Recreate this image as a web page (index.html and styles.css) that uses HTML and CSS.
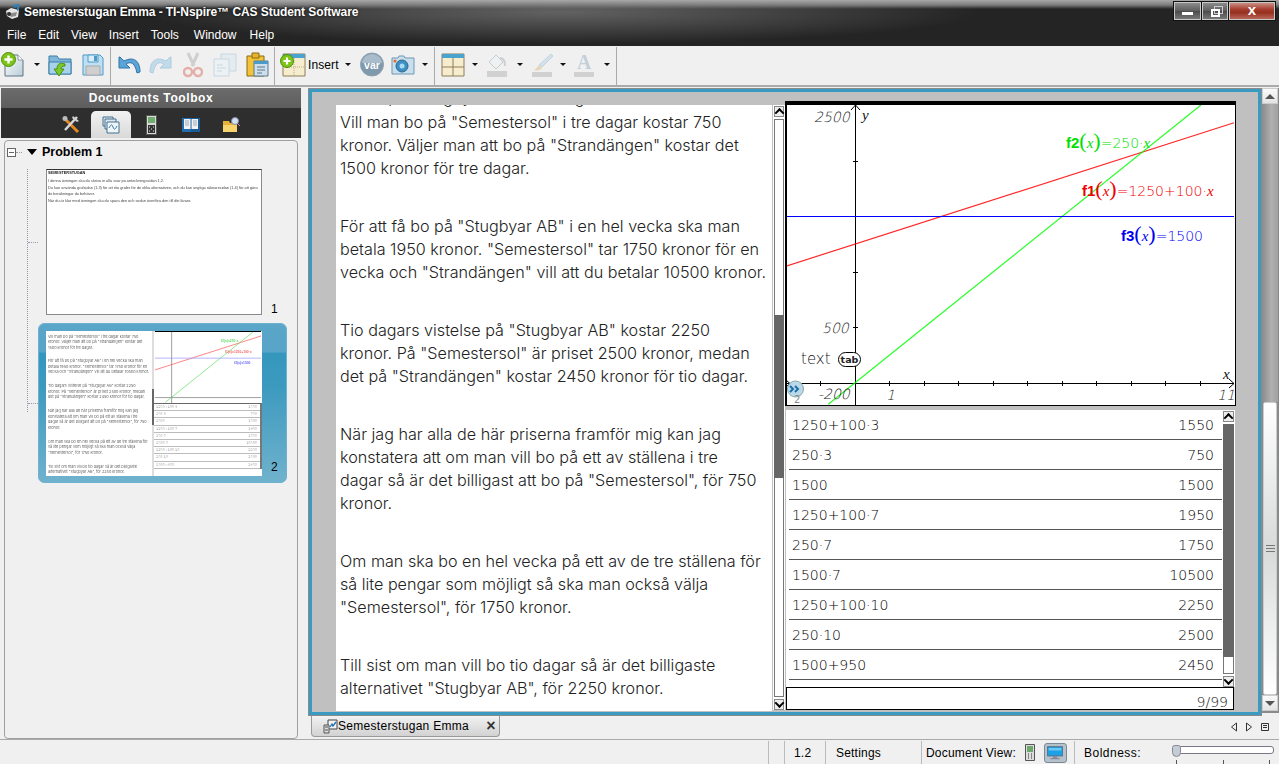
FILE: index.html
```html
<!DOCTYPE html>
<html lang="sv">
<head>
<meta charset="utf-8">
<title>Semesterstugan Emma - TI-Nspire™ CAS Student Software</title>
<link rel="stylesheet" href="styles.css">
</head>
<body>
<div class="app">
  <header class="chrome">
    <div class="titlebar">
      <svg class="appicon" width="18" height="16" viewBox="0 0 18 16"><path d="M2 7l5-3 8 2-1 7-6 2-5-3z" fill="#e6e6e6"/><path d="M3 8l5 1 5-1-1 4-5 1z" fill="#8a8a8a"/><path d="M9 1l6-1v6l-2 1V3l-3 1z" fill="#2f7fb5"/><circle cx="5" cy="10" r="2" fill="#333"/></svg>
      <span class="title">Semesterstugan Emma - TI-Nspire™ CAS Student Software</span>
      <div class="winbtns">
        <span class="winbtn wmin"><i class="minbar"></i></span>
        <span class="winbtn wmax"><i class="maxback"></i><i class="maxfront"></i></span>
        <span class="winbtn wclose">x</span>
      </div>
    </div>
    <nav class="menubar"><span>File</span><span>Edit</span><span>View</span><span>Insert</span><span>Tools</span><span>Window</span><span>Help</span></nav>
  </header>

  <div class="toolbar">
    <svg class="tool" width="24" height="26" viewBox="0 0 24 26"><defs><linearGradient id="pg" x1="0" y1="0" x2="1" y2="1"><stop offset="0" stop-color="#fff"/><stop offset="1" stop-color="#b9cdd8"/></linearGradient></defs><path d="M4 3h13l5 5v16H4z" fill="url(#pg)" stroke="#5f7483"/><path d="M17 3v5h5" fill="#fff" stroke="#8a9aa5"/><circle cx="7.500" cy="7.500" r="7" fill="#7cc417" stroke="#4f8f10"/><path d="M7.500 3.500v8M3.500 7.500h8" stroke="#fff" stroke-width="2.400"/></svg>
    <i class="drop d1"></i>
    <svg class="tool m8" width="24" height="24" viewBox="0 0 24 24"><path d="M1 3h8l2 3h12v15H1z" fill="#7fb6d9" stroke="#3b7fa8"/><path d="M1 9h22v12H1z" fill="#a9d2ea" stroke="#3b7fa8"/><path d="M17 11c-5-2-8 0-8 5H6l5 7 5-7h-3c0-2 1-3 4-3z" fill="#7cc92b" stroke="#4a9016"/></svg>
    <svg class="tool m10" width="22" height="24" viewBox="0 0 22 24"><path d="M1 2h17l3 3v17H1z" fill="#bfe0f2" stroke="#4d9ac8"/><path d="M6 2h10v7H6z" fill="#d8eef9" stroke="#4d9ac8"/><path d="M12 3h3v5h-3z" fill="#4d9ac8"/><path d="M4 13h14v9H4z" fill="#cfcfcf" stroke="#aaa"/></svg>
    <i class="sep s1"></i>
    <svg class="tool m6" width="24" height="22" viewBox="0 0 24 22"><path d="M2 3v11h11l-4-4c5-3 9-1 11 9l3-1c0-11-6-16-16-11L3 3z" fill="#5da4d6" stroke="#2c76ab"/></svg>
    <svg class="tool m8 faded" width="24" height="22" viewBox="0 0 24 22"><path d="M22 3v11H11l4-4c-5-3-9-1-11 9l-3-1C1 7 7 2 17 7l4-4z" fill="#9ccbe6" stroke="#77aecf"/></svg>
    <svg class="tool m10 faded" width="20" height="26" viewBox="0 0 20 26"><path d="M5 1l6 13M15 1L9 14" stroke="#b5b5b5" stroke-width="3"/><circle cx="5" cy="20" r="4" fill="none" stroke="#d97a6c" stroke-width="2.400"/><circle cx="15" cy="20" r="4" fill="none" stroke="#d97a6c" stroke-width="2.400"/></svg>
    <svg class="tool m10 faded" width="24" height="24" viewBox="0 0 24 24"><path d="M8 1h15v17H8z" fill="#dbe9f1" stroke="#a8c4d6"/><path d="M1 6h15v17H1z" fill="#eaf3f8" stroke="#a8c4d6"/><path d="M4 12h6M4 15h9M4 18h5" stroke="#a8c4d6"/></svg>
    <svg class="tool m9" width="23" height="26" viewBox="0 0 23 26"><path d="M1 4h17v20H1z" fill="#f3c33a" stroke="#8a6a12"/><path d="M6 1h7v5H6z" fill="#e8b42b" stroke="#8a6a12"/><path d="M8 9h14v15H8z" fill="#cfe0ea" stroke="#567a92"/><path d="M8 9h14v3H8z" fill="#4d9ac8"/><path d="M11 15h8M11 18h8M11 21h5" stroke="#567a92"/></svg>
    <i class="sep s2"></i>
    <svg class="tool m5" width="26" height="24" viewBox="0 0 26 24"><path d="M3 1h22v22H3z" fill="#f6edcf" stroke="#8f7f55"/><path d="M3 1h22v4H3z" fill="#4aa3cf"/><path d="M14 5v18M3 14h22" stroke="#b8ad8c" stroke-dasharray="1 1"/><circle cx="7" cy="8" r="6.500" fill="#7cc417" stroke="#4f8f10"/><path d="M7 4.500v7M3.500 8h7" stroke="#fff" stroke-width="2.200"/></svg>
    <span class="tooltext">Insert</span>
    <i class="drop d2"></i>
    <svg class="tool m9" width="24" height="25" viewBox="0 0 24 25"><circle cx="12" cy="12.500" r="11.500" fill="#7f99ad" stroke="#8fa1ae"/><path d="M2 11a10 9 0 0 1 20 0z" fill="#a9bccb"/><text class="vartext" x="12" y="16.500" text-anchor="middle">var</text></svg>
    <svg class="tool m7" width="24" height="20" viewBox="0 0 24 20"><path d="M1 3h6l1-2h5l1 2h9v16H1z" fill="#c9dfed" stroke="#6d97b3"/><circle cx="11" cy="11" r="6" fill="#3e90c4" stroke="#2b6689"/><circle cx="11" cy="11" r="2.500" fill="#a6dbf5"/><circle cx="4" cy="6" r="1.500" fill="#e8662a"/></svg>
    <i class="drop d3"></i>
    <i class="sep s3"></i>
    <svg class="tool m6" width="24" height="24" viewBox="0 0 24 24"><path d="M1 1h22v22H1z" fill="#f6edcf" stroke="#8f7f55"/><path d="M1 1h22v4H1z" fill="#4aa3cf"/><path d="M12 5v18M1 14h22" stroke="#8f7f55"/></svg>
    <i class="drop d4"></i>
    <svg class="tool m8 faded" width="22" height="24" viewBox="0 0 22 24"><path d="M3 9l7-7 7 7-7 7z" fill="#eef3f5" stroke="#9fb0ba"/><path d="M14 5c4 0 5 4 5 8" fill="none" stroke="#b5b5b5" stroke-width="2"/><path d="M1 18h20v6H1z" fill="#b9b9b9"/></svg>
    <i class="drop d5"></i>
    <svg class="tool m8 faded" width="22" height="24" viewBox="0 0 22 24"><path d="M20 1l2 2-11 11-3-2z" fill="#bcd7e6" stroke="#9dbccd"/><path d="M8 12l3 3c-2 3-6 3-8 2 2-1 3-3 5-5z" fill="#ddc68f"/><path d="M1 19h20v5H1z" fill="#b9b9b9"/></svg>
    <i class="drop d6"></i>
    <div class="tool m8 faded aicon"><span>A</span><i></i></div>
    <i class="drop d7"></i>
    <i class="sep s4"></i>
  </div>

  <main class="workspace">
    <aside class="side">
      <div class="sidehead">Documents Toolbox</div>
      <div class="sidetabs">
        <span class="stab"><svg width="20" height="20" viewBox="0 0 20 20"><path d="M3 3l14 14" stroke="#e58a1f" stroke-width="3"/><path d="M16 2L4 15" stroke="#d8d8d8" stroke-width="2.500"/><path d="M12 1l6 5-2 1-5-4z" fill="#cfcfcf"/><circle cx="4" cy="3.500" r="2.500" fill="#bbb"/></svg></span>
        <span class="stab active"><svg width="18" height="18" viewBox="0 0 18 18"><path d="M1 1h10v9H1z" fill="#dce8ef" stroke="#47718c"/><path d="M3 3h11v10H3z" fill="#dce8ef" stroke="#47718c"/><path d="M5 6h12v11H5z" fill="#eef5f9" stroke="#47718c"/><path d="M7 12c2-4 3-4 4-1s2 3 4-1" fill="none" stroke="#3a7ba3"/></svg></span>
        <span class="stab"><svg width="11" height="20" viewBox="0 0 11 20"><path d="M.5.5h10v19H.5z" fill="#d9d9d9" stroke="#555"/><path d="M2 2h7v6H2z" fill="#6fae6f"/><path d="M2 10h7v8H2z" fill="#333"/><path d="M3 12h1M7 12h1M5 14h1M3 16h1M7 16h1" stroke="#eee"/></svg></span>
        <span class="stab"><svg width="18" height="16" viewBox="0 0 18 16"><path d="M0 1h9v14H0z" fill="#1f6fb0"/><path d="M9 1h9v14H9z" fill="#1a5d94"/><path d="M2 2h6.500v10H2zM9.500 2H16v10H9.500z" fill="#f2f2f2"/><path d="M3 4h4M3 6h4M3 8h4M11 4h4M11 6h4M11 8h4" stroke="#9ab"/></svg></span>
        <span class="stab"><svg width="18" height="16" viewBox="0 0 18 16"><path d="M1 4h6l1 2h7v9H1z" fill="#e8b23a"/><path d="M1 8h14v7H1z" fill="#f7d56c"/><circle cx="13" cy="4" r="3.500" fill="#cfe3f0" stroke="#88a"/><path d="M15 6l3 3" stroke="#c9a"/></svg></span>
      </div>
      <div class="tree">
        <div class="problem"><i class="collapse"></i><i class="dots"></i><i class="tri"></i><b>Problem 1</b></div>
        <div class="branch">
          <div class="thumbrow first">
            <div class="thumb t1">
              <b>SEMESTERSTUGAN</b>
              <p>I denna övningen ska du skriva in alla svar på anteckningssidan 1.2.</p>
              <p>Du kan använda grafsidan (1.3) för att rita grafer för de olika alternativen, och du kan ungtiga räknaresidan (1.4) för att göra de beräkningar du behöver.</p>
              <p>När du är klar med övningen ska du spara den och sedan överföra den till din lärare.</p>
            </div>
            <span class="num">1</span>
          </div>
          <div class="thumbrow selected">
            <div class="thumb t2">
              <div class="minitext">
                <p>Vill man bo på "Semestersol" i tre dagar kostar 750<br>kronor. Väljer man att bo på "Strandängen" kostar det<br>1500 kronor för tre dagar.</p>
                <p>För att få bo på "Stugbyar AB" i en hel vecka ska man<br>betala 1950 kronor. "Semestersol" tar 1750 kronor för en<br>vecka och "Strandängen" vill att du betalar 10500 kronor.</p>
                <p>Tio dagars vistelse på "Stugbyar AB" kostar 2250<br>kronor. På "Semestersol" är priset 2500 kronor, medan<br>det på "Strandängen" kostar 2450 kronor för tio dagar.</p>
                <p>När jag har alla de här priserna framför mig kan jag<br>konstatera att om man vill bo på ett av ställena i tre<br>dagar så är det billigast att bo på "Semestersol", för 750<br>kronor.</p>
                <p>Om man ska bo en hel vecka på ett av de tre ställena för<br>så lite pengar som möjligt så ska man också välja<br>"Semestersol", för 1750 kronor.</p>
                <p>Till sist om man vill bo tio dagar så är det billigaste<br>alternativet "Stugbyar AB", för 2250 kronor.</p>
              </div>
              <i class="minibar"></i>
              <div class="minicol">
                <svg class="minigraph" width="108" height="72" viewBox="0 0 450 305"><rect width="450" height="305" fill="#fff"/><path d="M0 2h450" stroke="#000" stroke-width="5"/><path d="M71 0v305M0 282h450" stroke="#333" stroke-width="2"/><path d="M0 165L450 21" stroke="#f55" stroke-width="3"/><path d="M43 303L416 4" stroke="#6d6" stroke-width="3"/><path d="M0 115h450" stroke="#99f" stroke-width="3"/><g class="minifn"><text x="280" y="46" fill="#2c2">f2(x)=250·x</text><text x="297" y="94" fill="#e22">f1(x)=1250+100·x</text><text x="336" y="139" fill="#22e">f3(x)=1500</text></g></svg>
                <div class="minitable">
                  <div><span>1250+100·3</span><span>1550</span></div><div><span>250·3</span><span>750</span></div><div><span>1500</span><span>1500</span></div><div><span>1250+100·7</span><span>1950</span></div><div><span>250·7</span><span>1750</span></div><div><span>1500·7</span><span>10500</span></div><div><span>1250+100·10</span><span>2250</span></div><div><span>250·10</span><span>2500</span></div><div><span>1500+950</span><span>2450</span></div>
                </div>
              </div>
            </div>
            <span class="num">2</span>
          </div>
        </div>
      </div>
    </aside>

    <div class="docarea">
      <section class="docframe">
        <div class="page">
          <div class="notes">
            <div class="notes-flow">
              <p><span class="clipped">Att bo på "Stugbyar AB" i tre dagar kostar 1550 kronor.</span>Vill man bo på "Semestersol" i tre dagar kostar 750<br>kronor. Väljer man att bo på "Strandängen" kostar det<br>1500 kronor för tre dagar.</p>
              <p>För att få bo på "Stugbyar AB" i en hel vecka ska man<br>betala 1950 kronor. "Semestersol" tar 1750 kronor för en<br>vecka och "Strandängen" vill att du betalar 10500 kronor.</p>
              <p>Tio dagars vistelse på "Stugbyar AB" kostar 2250<br>kronor. På "Semestersol" är priset 2500 kronor, medan<br>det på "Strandängen" kostar 2450 kronor för tio dagar.</p>
              <p>När jag har alla de här priserna framför mig kan jag<br>konstatera att om man vill bo på ett av ställena i tre<br>dagar så är det billigast att bo på "Semestersol", för 750<br>kronor.</p>
              <p>Om man ska bo en hel vecka på ett av de tre ställena för<br>så lite pengar som möjligt så ska man också välja<br>"Semestersol", för 1750 kronor.</p>
              <p>Till sist om man vill bo tio dagar så är det billigaste<br>alternativet "Stugbyar AB", för 2250 kronor.</p>
            </div>
          </div>
          <div class="vscroll notes-scroll">
            <span class="sbtn up"></span>
            <span class="strack"><i class="sthumb nthumb"></i></span>
            <span class="sbtn down"></span>
          </div>
          <div class="rightcol">
            <svg class="graph" width="451" height="305" viewBox="787 105 448 300">
              <rect x="785" y="101" width="450" height="305" fill="#fff"/>
              <g stroke="#000" fill="none">
                <path d="M855.500 105v300M785 383.500h449"/>
                <path d="M820.500 381v5M889.500 381v5M924.500 381v5M958.500 381v5M993.500 381v5M1027.500 381v5M1062.500 381v5M1096.500 381v5M1131.500 381v5M1165.500 381v5M1200.500 381v5"/>
                <path d="M853 161.500h5M853 272.500h5M853 327.500h5"/>
                <path d="M851 110l4.500-5 4.500 5M1229 379l5 4.500-5 4.500"/>
                <path d="M786 380l4 3.500-4 3.500"/>
              </g>
              <path d="M785 266.500L1234 122.700" stroke="#f00" stroke-opacity=".85" stroke-width="1.200"/>
              <path d="M828.300 404.300L1201 105" stroke="#0f0" stroke-opacity=".85" stroke-width="1.200"/>
              <path d="M785 216.500h449" stroke="#00f" stroke-width="1"/>
              <g class="gnum"><text x="814" y="122">2500</text><text x="822" y="333">500</text><text x="818" y="399">-200</text><text x="886" y="400">1</text><text x="1217" y="400">11</text></g>
              <text class="gvar" x="862" y="120">y</text>
              <text class="gvar" x="1223" y="379">x</text>
              <text class="gtext" x="801" y="364">text</text>
              <rect x="838.500" y="352.500" width="22" height="14" rx="7" fill="#fff" stroke="#000"/>
              <text class="gtab" x="849.500" y="363" text-anchor="middle">tab</text>
              <circle cx="795.500" cy="389" r="8" fill="#bcd9ea" stroke="#8aa"/>
              <path d="M790 386l3 3-3 3M795 386l3 3-3 3" fill="none" stroke="#1a6fa8" stroke-width="2"/>
              <text class="gmini" x="794" y="403">2</text>
              <g class="gfn green"><text x="1066" y="148"><tspan class="fb">f2</tspan><tspan class="par">(</tspan><tspan class="fx">x</tspan><tspan class="par">)</tspan>=250·<tspan class="fx">x</tspan></text></g>
              <g class="gfn red"><text x="1082" y="196"><tspan class="fb">f1</tspan><tspan class="par">(</tspan><tspan class="fx">x</tspan><tspan class="par">)</tspan>=1250+100·<tspan class="fx">x</tspan></text></g>
              <g class="gfn blue"><text x="1121" y="241"><tspan class="fb">f3</tspan><tspan class="par">(</tspan><tspan class="fx">x</tspan><tspan class="par">)</tspan>=1500</text></g>
            </svg>
            <div class="calc">
              <div class="calc-list">
                <div class="crow"><span>1250+100·3</span><span>1550</span></div>
                <div class="crow"><span>250·3</span><span>750</span></div>
                <div class="crow"><span>1500</span><span>1500</span></div>
                <div class="crow"><span>1250+100·7</span><span>1950</span></div>
                <div class="crow"><span>250·7</span><span>1750</span></div>
                <div class="crow"><span>1500·7</span><span>10500</span></div>
                <div class="crow"><span>1250+100·10</span><span>2250</span></div>
                <div class="crow"><span>250·10</span><span>2500</span></div>
                <div class="crow"><span>1500+950</span><span>2450</span></div>
              </div>
              <div class="vscroll calc-scroll">
                <span class="sbtn up"></span>
                <span class="strack"><i class="sthumb cthumb"></i></span>
                <span class="sbtn down"></span>
              </div>
            </div>
            <div class="entry">9/99</div>
          </div>
        </div>
      </section>
      <div class="mainscroll">
        <span class="mbtn mup"></span>
        <span class="mtrack"></span>
        <span class="mthumb"><i></i></span>
        <span class="mbtn mdown"></span>
      </div>
    </div>
  </main>

  <div class="tabsrow">
    <div class="doctab">
      <svg width="15" height="15" viewBox="0 0 15 15"><path d="M5 1h9v9H5z" fill="#f4f4f4" stroke="#444"/><path d="M7 8l2-3 1 2 3-4" fill="none" stroke="#1c6fb0" stroke-width="1.300"/><path d="M1 6h5v8H1z" fill="#ddd" stroke="#555"/><path d="M2 8h3M2 11h3" stroke="#555"/></svg>
      <span>Semesterstugan Emma</span>
      <em>×</em>
    </div>
    <div class="tabnav">
      <svg width="8" height="10" viewBox="0 0 8 10"><path d="M6.500 1v8L1.500 5z" fill="none" stroke="#333"/></svg>
      <svg width="8" height="10" viewBox="0 0 8 10"><path d="M1.500 1v8L6.500 5z" fill="none" stroke="#333"/></svg>
      <svg width="10" height="10" viewBox="0 0 10 10"><path d="M1.500 1.500h7v7h-7z" fill="none" stroke="#333"/><path d="M3 3.500h4M3 5.500h4" stroke="#333"/></svg>
    </div>
  </div>

  <footer class="status">
    <i class="vsep blank"></i>
    <span class="stat pageno">1.2</span>
    <span class="stat settings">Settings</span>
    <span class="stat docview">Document View:
      <svg class="dvcalc" width="10" height="17" viewBox="0 0 10 17"><path d="M.5.5h9v16h-9z" fill="#ddd" stroke="#555"/><path d="M2 2h6v6H2z" fill="#6fa86f"/><path d="M3 10h1M6 10h1M3 12h1M6 12h1M3 14h1M6 14h1" stroke="#333"/></svg>
      <span class="dvbtn"><svg width="16" height="14" viewBox="0 0 19 16"><path d="M.5.5h18v11H.5z" fill="#1ea0e6" stroke="#567"/><path d="M2 2h15v3H2z" fill="#6cc8f5"/><path d="M7 12h5v2H7zM4 14h11v1.500H4z" fill="#889"/></svg></span>
    </span>
    <span class="stat bold">Boldness:</span>
    <div class="slider"><i class="sltrack"></i><i class="slknob"></i><i class="ticks"><b></b><b></b><b></b></i></div>
  </footer>
</div>
</body>
</html>
```
FILE: styles.css
```css
* { box-sizing: border-box; }
html, body { margin: 0; padding: 0; width: 1279px; height: 764px; overflow: hidden; }
body { font-family: "Liberation Sans", Arial, sans-serif; background: #f0f0f0; color: #000; }
i, em { font-style: normal; }
p { margin: 0; }
.app { width: 1279px; height: 764px; display: flex; flex-direction: column; }

/* window chrome */
.chrome { height: 46px; flex: none; color: #fff;
  background: linear-gradient(#a8a8a8 0, #7c7c7c 5px, rgba(90,90,90,0) 9px), radial-gradient(ellipse 420px 32px at 560px 12px, #626262, rgba(60,60,60,0)), #242424; }
.titlebar { height: 24px; display: flex; align-items: center; padding-left: 4px; position: relative; }
.appicon { flex: none; }
.title { margin-left: 2px; font-size: 12px; letter-spacing: -.07px; font-weight: 700; text-shadow: 0 0 3px #000; white-space: nowrap; }
.winbtns { position: absolute; right: 3px; top: 1px; display: flex; background: #111; padding: 1px; gap: 1px; height: 20px; }
.winbtn { display: flex; align-items: center; justify-content: center; border: 1px solid #c8c8c8; position: relative;
  background: linear-gradient(#8b8b8b, #5c5c5c 50%, #4a4a4a 51%, #777); }
.wmin { width: 27px; } .wmax { width: 26px; }
.wclose { width: 46px; font: 700 15px/1 "Liberation Sans", sans-serif; color: #fff; padding-bottom: 3px;
  background: linear-gradient(#c98e83, #a63d2e 40%, #96301f 60%, #b8675a); }
.minbar { width: 11px; height: 3px; background: #fff; margin-top: 4px; }
.maxfront { position: absolute; left: 8px; top: 6px; width: 9px; height: 8px; border: 2px solid #fff; }
.maxback { position: absolute; left: 11px; top: 3px; width: 9px; height: 8px; border: 1px solid #ccc; }
.menubar { height: 22px; display: flex; align-items: center; padding-left: 7px; gap: 12px; font-size: 12px; }
.menubar span:nth-child(6) { margin-left: 3px; }
.menubar span:nth-child(7) { margin-left: 1px; }

/* toolbar */
.toolbar { height: 41px; flex: none; display: flex; align-items: center; padding-left: 1px; padding-bottom: 2px; background: #f0f0f0; border-bottom: 2px solid #aaa; }
.tool { flex: none; display: block; }
.faded { opacity: .55; }
.m5 { margin-left: 5px; } .m6 { margin-left: 6px; } .m7 { margin-left: 7px; } .m8 { margin-left: 8px; } .m9 { margin-left: 9px; } .m10 { margin-left: 10px; }
.drop { flex: none; width: 0; height: 0; border: 3px solid transparent; border-top: 3px solid #111; border-bottom: 0; }
.d1 { margin-left: 9px; } .d2 { margin-left: 6px; } .d3 { margin-left: 7px; } .d4 { margin-left: 7px; } .d5 { margin-left: 9px; } .d6 { margin-left: 7px; } .d7 { margin-left: 9px; }
.sep { flex: none; width: 1px; height: 38px; background: #aaa; margin-top: 2px; }
.s1 { margin-left: 6px; } .s2 { margin-left: 5px; } .s3 { margin-left: 6px; } .s4 { margin-left: 6px; }
.tooltext { font-size: 12px; margin-left: 2px; letter-spacing: .1px; }
.vartext { font: 700 10.500px "Liberation Sans", sans-serif; fill: #fff; }
.aicon { width: 21px; height: 24px; display: flex; flex-direction: column; align-items: center; }
.aicon span { font: 700 20px/18px "Liberation Serif", serif; color: #9db7c7; }
.aicon i { width: 20px; height: 5px; background: #b9b9b9; margin-top: 1px; }

/* workspace */
.workspace { height: 629px; flex: none; display: flex; padding-top: 1px; }
.side { width: 300px; margin-left: 1px; flex: none; display: flex; flex-direction: column; }
.sidehead { height: 20px; flex: none; background: linear-gradient(#6c6c6c, #5d5d5d); color: #fff; font-size: 12px; font-weight: 700; text-align: center; line-height: 20px; letter-spacing: .6px; }
.sidetabs { height: 30px; flex: none; background: #2e2e2e; display: flex; padding-left: 50px; align-items: flex-end; }
.stab { width: 40px; height: 27px; display: flex; align-items: center; justify-content: center; }
.stab.active { background: linear-gradient(#f2f2f2, #d9d9d9); border-radius: 5px 5px 0 0; }
.tree { margin: 2px 3px 0; width: 294px; height: 599px; flex: none; border: 1px solid #a0a0a0; border-radius: 4px; background: #f0f0f0; }
.problem { height: 22px; display: flex; align-items: center; padding-left: 1px; }
.collapse { width: 9px; height: 9px; border: 1px solid #666; background: linear-gradient(#666,#666) center/5px 1px no-repeat #fff; margin-left: 1px; }
.dots { width: 6px; border-top: 1px dotted #99a; margin-right: 3px; }
.tri { width: 0; height: 0; border: 5px solid transparent; border-top: 6px solid #000; border-bottom: 0; margin-left: 2px; }
.problem b { margin-left: 5px; font-size: 12.500px; }
.branch { margin-left: 22px; position: relative; border-left: 1px dotted #99a; height: 243px; }
.thumbrow { display: flex; position: relative; }
.thumbrow.first { margin: 6px 0 0 18px; height: 146px; }
.thumbrow.first::before { content: ""; position: absolute; left: -18px; top: 73px; width: 10px; border-top: 1px dotted #99a; }
.thumbrow.selected { margin: 8px 0 0 10px; width: 249px; height: 160px; padding: 8px; border-radius: 7px;
  background: linear-gradient(#5aa6c9 0, #57a4c8 18%, #3597bd 19%, #3d9abf 40%, #70b2cd 100%); box-shadow: inset 0 0 0 1px #6fb2cf; }
.thumbrow.selected::before { content: ""; position: absolute; left: -10px; top: 80px; width: 10px; border-top: 1px dotted #99a; }
.thumb { width: 216px; flex: none; background: #fff; overflow: hidden; }
.t1 { height: 146px; border: 1px solid #8a8a8a; border-top: 1px solid #333; padding: 1px 1px; font-size: 3.850px; line-height: 5.200px; color: #444; }
.t1 b, .t1 p { filter: blur(.25px); }
.t1 b { display: block; color: #222; margin-bottom: 3px; }
.t1 p { margin-bottom: 2px; }
.num { font-size: 12px; margin-left: 9px; align-self: flex-end; line-height: 12px; }
.thumbrow.selected .num { margin-bottom: 2px; }
.t2 { height: 145px; display: flex; }
.minitext { width: 106px; flex: none; padding: 2.500px 0 0 2px; font: 300 3.840px/5.520px Inter, sans-serif; color: #333; overflow: hidden; white-space: nowrap; filter: blur(.25px); }
.minitext p { margin: 0 0 8.400px; }
.minibar { width: 2px; flex: none; background: linear-gradient(#ddd 0 40%, #666 40% 65%, #ddd 65%); }
.minicol { width: 108px; flex: none; }
.minigraph { display: block; }
.minifn { font: 700 14px "Liberation Sans", sans-serif; filter: blur(1px); opacity: .7; }
.minitable { border-top: 1px solid #666; font: 300 3.400px/7.200px "DejaVu Sans", sans-serif; color: #333; border-right: 2px solid #777; }
.minitable div { display: flex; justify-content: space-between; padding: 0 3px 0 2px; border-bottom: 1px solid #bbb; height: 7.200px; }

/* document */
.docarea { width: 971px; margin-left: 7px; flex: none; display: flex; height: 628px; }
.docframe { width: 954px; height: 628px; flex: none; border: 4px solid #3a9ac1; outline: 1px solid #8a8a8a; outline-offset: -1px; background: #c0c0c0; padding: 9px 0 0 24px; }
.page { display: flex; height: 606px; }
.notes { width: 436px; flex: none; height: 606px; margin-top: 4px; background: #fff; overflow: hidden; }
.notes-flow { margin-top: -19px; padding-left: 4px; font: 300 16.170px/23px Inter, sans-serif; color: #222; white-space: nowrap; }
.notes-flow p { margin-bottom: 35px; }
.clipped { display: block; margin-bottom: 2px; }
.vscroll { display: flex; flex-direction: column; flex: none; background: #fff; }
.notes-scroll { width: 13px; height: 605px; margin-top: 4px; padding: 1px 1px 0; border-left: 1px solid #c0c0c0; }
.sbtn { height: 11px; flex: none; border: 1px solid #888; background: #eee; display: flex; align-items: center; justify-content: center; }
.sbtn.up::after, .sbtn.down::after { content: ""; width: 5px; height: 5px; border: solid #000; border-width: 2px 0 0 2px; transform: rotate(45deg) translate(1px,1px); }
.sbtn.down::after { transform: rotate(225deg) translate(1px,1px); }
.strack { flex: 1; border: 1px solid #777; margin: 2px 0; position: relative; background: #fff; }
.sthumb { position: absolute; left: -1px; right: -1px; background: #666; }
.nthumb { top: 195px; height: 163px; }
.cthumb { top: -1px; height: 233px; }
.rightcol { width: 451px; flex: none; display: flex; flex-direction: column; }
.graph { display: block; flex: none; border: solid #000; border-width: 4px 1px 1px 2px; }
.gnum text { font: italic 14px "DejaVu Sans Light", "DejaVu Sans", sans-serif; fill: #222; }
.gvar { font: italic 15px "Liberation Serif", serif; fill: #111; }
.gtext { font: 300 15px "DejaVu Sans", sans-serif; fill: #111; }
.gtab { font: 700 9.500px "DejaVu Sans", sans-serif; fill: #222; }
.gmini { font: 10px "DejaVu Sans", sans-serif; fill: #888; }
.gfn text { font: 300 14px "DejaVu Sans", sans-serif; }
.green text { fill: #00e000; } .red text { fill: #f00000; } .blue text { fill: #0000f0; }
.fb { font: 700 15px "Liberation Sans", sans-serif; }
.par { font: 400 22px "Liberation Serif", serif; }
.fx { font: italic 15px "Liberation Serif", serif; }
.calc { margin: 4px 1px 0; height: 277px; flex: none; background: #fff; display: flex; overflow: hidden; }
.calc-list { width: 436px; flex: none; padding-left: 3px; font: 300 14px/30px "DejaVu Sans", sans-serif; color: #000; }
.crow { height: 30px; display: flex; justify-content: space-between; padding: 0 8px 0 3px; border-bottom: 1px solid #555; }
.calc-scroll { width: 11px; margin-left: 1px; padding-top: 1px; }
.entry { height: 23px; flex: none; margin: 0 2px 0 1px; background: #fff; border: 1px solid #000; text-align: right; padding-right: 5px; font: 300 14px/29px "DejaVu Sans", sans-serif; color: #111; overflow: hidden; }

/* main scrollbar */
.mainscroll { width: 17px; flex: none; display: flex; flex-direction: column; border-right: 1px solid #8a8a8a; background: #8a8a8a; height: 625px; }
.mbtn { height: 16px; flex: none; background: linear-gradient(#fafafa, #e4e4e4); border: 1px solid #ccc; display: flex; align-items: center; justify-content: center; }
.mbtn::after { content: ""; width: 0; height: 0; border: 5px solid transparent; }
.mup::after { border-bottom: 5px solid #555; border-top: 0; }
.mdown::after { border-top: 5px solid #555; border-bottom: 0; }
.mtrack { height: 298px; flex: none; background: linear-gradient(90deg, #8b8b8b, #b0b0b0 60%, #a0a0a0); }
.mthumb { height: 293px; flex: none; margin: 0 1px; border: 1px solid #ccc; border-radius: 2px; background: linear-gradient(#fff, #d8dada 50%, #fff); display: flex; align-items: center; justify-content: center; }
.mthumb i { width: 9px; height: 7px; background: repeating-linear-gradient(#777 0 1px, transparent 1px 3px); }

/* doc tabs */
.tabsrow { height: 24px; flex: none; display: flex; align-items: flex-start; justify-content: space-between; border-bottom: 1px solid #aaa; padding-left: 311px; }
.doctab { width: 189px; height: 21px; display: flex; align-items: center; padding-left: 11px; font-size: 12px; letter-spacing: .3px; border: 1px solid #9a9a9a; border-top: 0; border-radius: 0 0 4px 4px; background: linear-gradient(#f2f2f2, #d2d2d2); }
.doctab em { margin-left: auto; margin-right: 3px; font-size: 16px; font-weight: 700; line-height: 16px; color: #333; }
.tabnav { display: flex; gap: 7px; padding: 6px 9px 0 0; align-items: center; }

/* status */
.status { height: 25px; flex: none; display: flex; align-items: center; padding-left: 768px; font-size: 12px; letter-spacing: .2px; }
.vsep { width: 16px; height: 23px; border-left: 1px solid #bbb; }
.stat { height: 23px; display: flex; align-items: center; border-left: 1px solid #bbb; }
.pageno { width: 41px; padding-left: 9px; }
.settings { width: 96px; padding-left: 10px; }
.docview { width: 153px; padding-left: 4px; }
.dvcalc { margin-left: 9px; }
.dvbtn { margin-left: 9px; width: 23px; height: 20px; display: flex; align-items: center; justify-content: center; background: #b5c2cc; border: 1px solid #7d8a96; border-radius: 3px; }
.bold { width: 98px; padding-left: 9px; letter-spacing: .5px; }
.slider { position: relative; width: 104px; height: 25px; flex: none; }
.sltrack { position: absolute; left: 2px; top: 6px; width: 100px; height: 8px; border: 1px solid #778; border-radius: 3px; background: #fff; }
.slknob { position: absolute; left: 0; top: 5px; width: 9px; height: 12px; background: #c4ccd4; border: 1px solid #889; border-radius: 3px 3px 5px 5px; }
.ticks { position: absolute; left: 4px; top: 20px; width: 94px; display: flex; justify-content: space-between; }
.ticks b { width: 1px; height: 5px; background: #555; }
```
